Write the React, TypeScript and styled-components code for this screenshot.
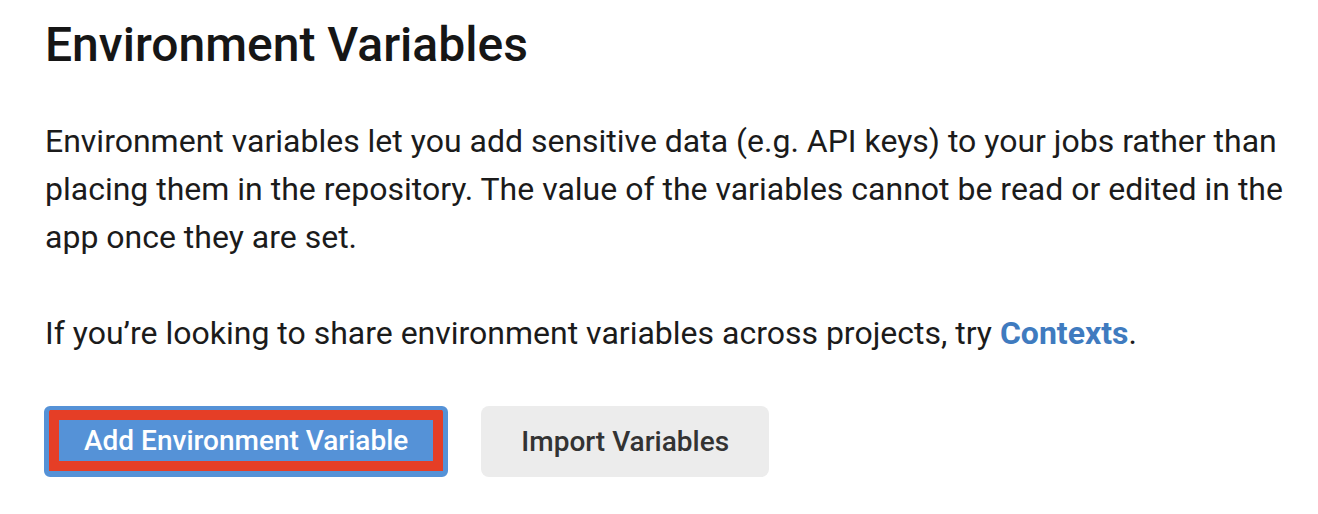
import React from 'react'
import styled, { createGlobalStyle } from 'styled-components'

const GlobalStyle = createGlobalStyle`
  body {
    margin: 0;
    background: #fff;
    font-family: Roboto, "Noto Sans", sans-serif;
  }
`

const Page = styled.div`
  padding: 13px 20px 0 45px;
  color: #1b1b1b;
`

const Title = styled.h1`
  margin: 0;
  font-size: 48px;
  font-weight: 500;
  line-height: 64px;
  color: #161616;
`

const Text = styled.p`
  margin: 0;
  font-size: 32px;
  line-height: 48px;
`

const Intro = styled(Text)`
  margin-top: 40px;
`

const Hint = styled(Text)`
  margin-top: 48px;
`

const Link = styled.a`
  color: #3f7bbf;
  font-weight: 700;
  text-decoration: none;
`

const Actions = styled.div`
  display: flex;
  gap: 33px;
  margin-top: 49px;
  margin-left: -1px;
`

const Button = styled.button<{ $primary?: boolean }>`
  box-sizing: border-box;
  height: 71px;
  padding: 0 40px;
  border: none;
  border-radius: 8px;
  font-family: Roboto, "Noto Sans", sans-serif;
  font-size: 28px;
  font-weight: 500;
  cursor: pointer;
  background: ${p => (p.$primary ? '#5592d7' : '#ececec')};
  color: ${p => (p.$primary ? '#fff' : '#333')};
  ${p =>
    p.$primary &&
    `
    border: 5px solid #5592d7;
    border-top-width: 4px;
    border-bottom-width: 6px;
    border-radius: 6px;
    padding: 0 35px;
    box-shadow: inset 0 0 0 10px #e53e26;
  `}
`

export default function App() {
  return (
    <Page>
      <GlobalStyle />
      <Title>Environment Variables</Title>
      <Intro>
        Environment variables let you add sensitive data (e.g. API keys) to your jobs rather than
        placing them in the repository. The value of the variables cannot be read or edited in the
        app once they are set.
      </Intro>
      <Hint>
        If you’re looking to share environment variables across projects, try <Link href="#">Contexts</Link>.
      </Hint>
      <Actions>
        <Button $primary>Add Environment Variable</Button>
        <Button>Import Variables</Button>
      </Actions>
    </Page>
  )
}
